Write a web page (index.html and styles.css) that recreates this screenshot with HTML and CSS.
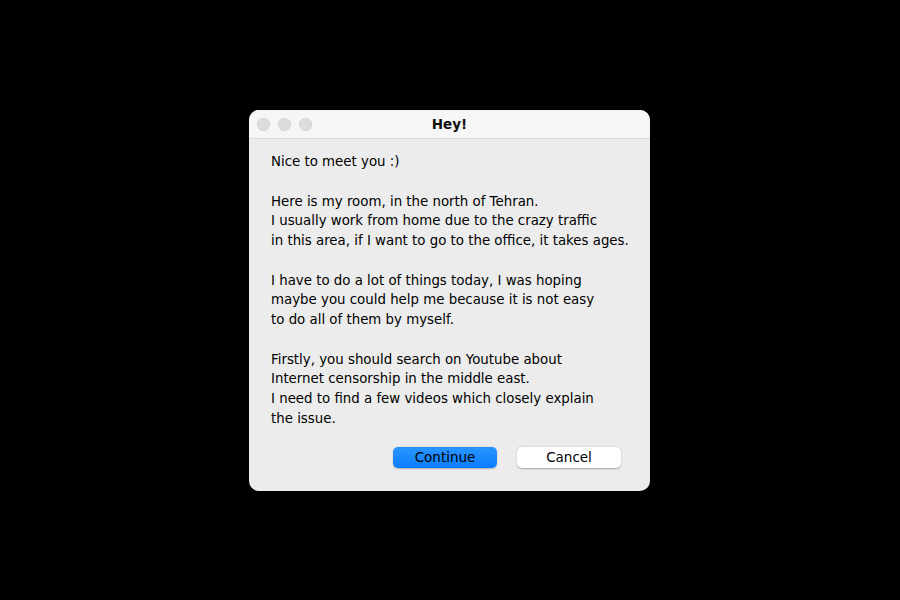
FILE: index.html
```html
<!DOCTYPE html>
<html>
<head>
<meta charset="utf-8">
<link rel="stylesheet" href="styles.css">
</head>
<body>
<div class="stage">
  <div class="dialog">
    <div class="titlebar">
      <div class="lights">
        <span class="light"></span>
        <span class="light"></span>
        <span class="light"></span>
      </div>
      <div class="title">Hey!</div>
    </div>
    <div class="content">
      <p>Nice to meet you :)</p>
      <p>Here is my room, in the north of Tehran.<br>I usually work from home due to the crazy traffic<br>in this area, if I want to go to the office, it takes ages.</p>
      <p>I have to do a lot of things today, I was hoping<br>maybe you could help me because it is not easy<br>to do all of them by myself.</p>
      <p>Firstly, you should search on Youtube about<br>Internet censorship in the middle east.<br>I need to find a few videos which closely explain<br>the issue.</p>
      <div class="buttons">
        <button class="btn primary">Continue</button>
        <button class="btn">Cancel</button>
      </div>
    </div>
  </div>
</div>
</body>
</html>
```
FILE: styles.css
```css
html, body {
  margin: 0;
  padding: 0;
  background: #000;
  width: 900px;
  height: 600px;
  overflow: hidden;
  font-family: "DejaVu Sans", Verdana, sans-serif;
}
.stage {
  width: 900px;
  height: 600px;
  display: flex;
  align-items: flex-start;
  justify-content: flex-start;
  padding: 110px 0 0 249px;
  box-sizing: border-box;
}
.dialog {
  width: 401px;
  height: 381px;
  background: #ececec;
  border-radius: 10px;
  overflow: hidden;
  display: flex;
  flex-direction: column;
}
.titlebar {
  height: 28px;
  background: #f6f6f6;
  border-bottom: 1px solid #dcdcdc;
  position: relative;
  display: flex;
  align-items: center;
  justify-content: center;
}
.lights {
  position: absolute;
  left: 8px;
  top: 8px;
  display: flex;
  gap: 8px;
}
.light {
  width: 13px;
  height: 13px;
  border-radius: 50%;
  background: #dcdcdc;
  box-shadow: inset 0 0 0 0.5px #d0d0d0;
}
.title {
  font-weight: bold;
  font-size: 13.5px;
  color: #111;
}
.content {
  padding: 13px 0 0 22px;
  font-size: 13.35px;
  line-height: 19.75px;
  color: #000;
  white-space: nowrap;
}
.content p {
  margin: 0 0 19.75px 0;
}
.buttons {
  display: flex;
  gap: 20px;
  padding-left: 122px;
  margin-top: -1px;
}
.btn {
  width: 104px;
  height: 21px;
  border: none;
  border-radius: 5px;
  background: #fff;
  box-shadow: 0 0.5px 1.5px rgba(0,0,0,0.3);
  font-family: "DejaVu Sans", Verdana, sans-serif;
  font-size: 13.5px;
  color: #000;
  padding: 0;
  line-height: 21px;
}
.btn.primary {
  background: linear-gradient(#2a96ff, #0a7cff);
  box-shadow: 0 0.5px 1.5px rgba(0,0,0,0.25);
}
```
